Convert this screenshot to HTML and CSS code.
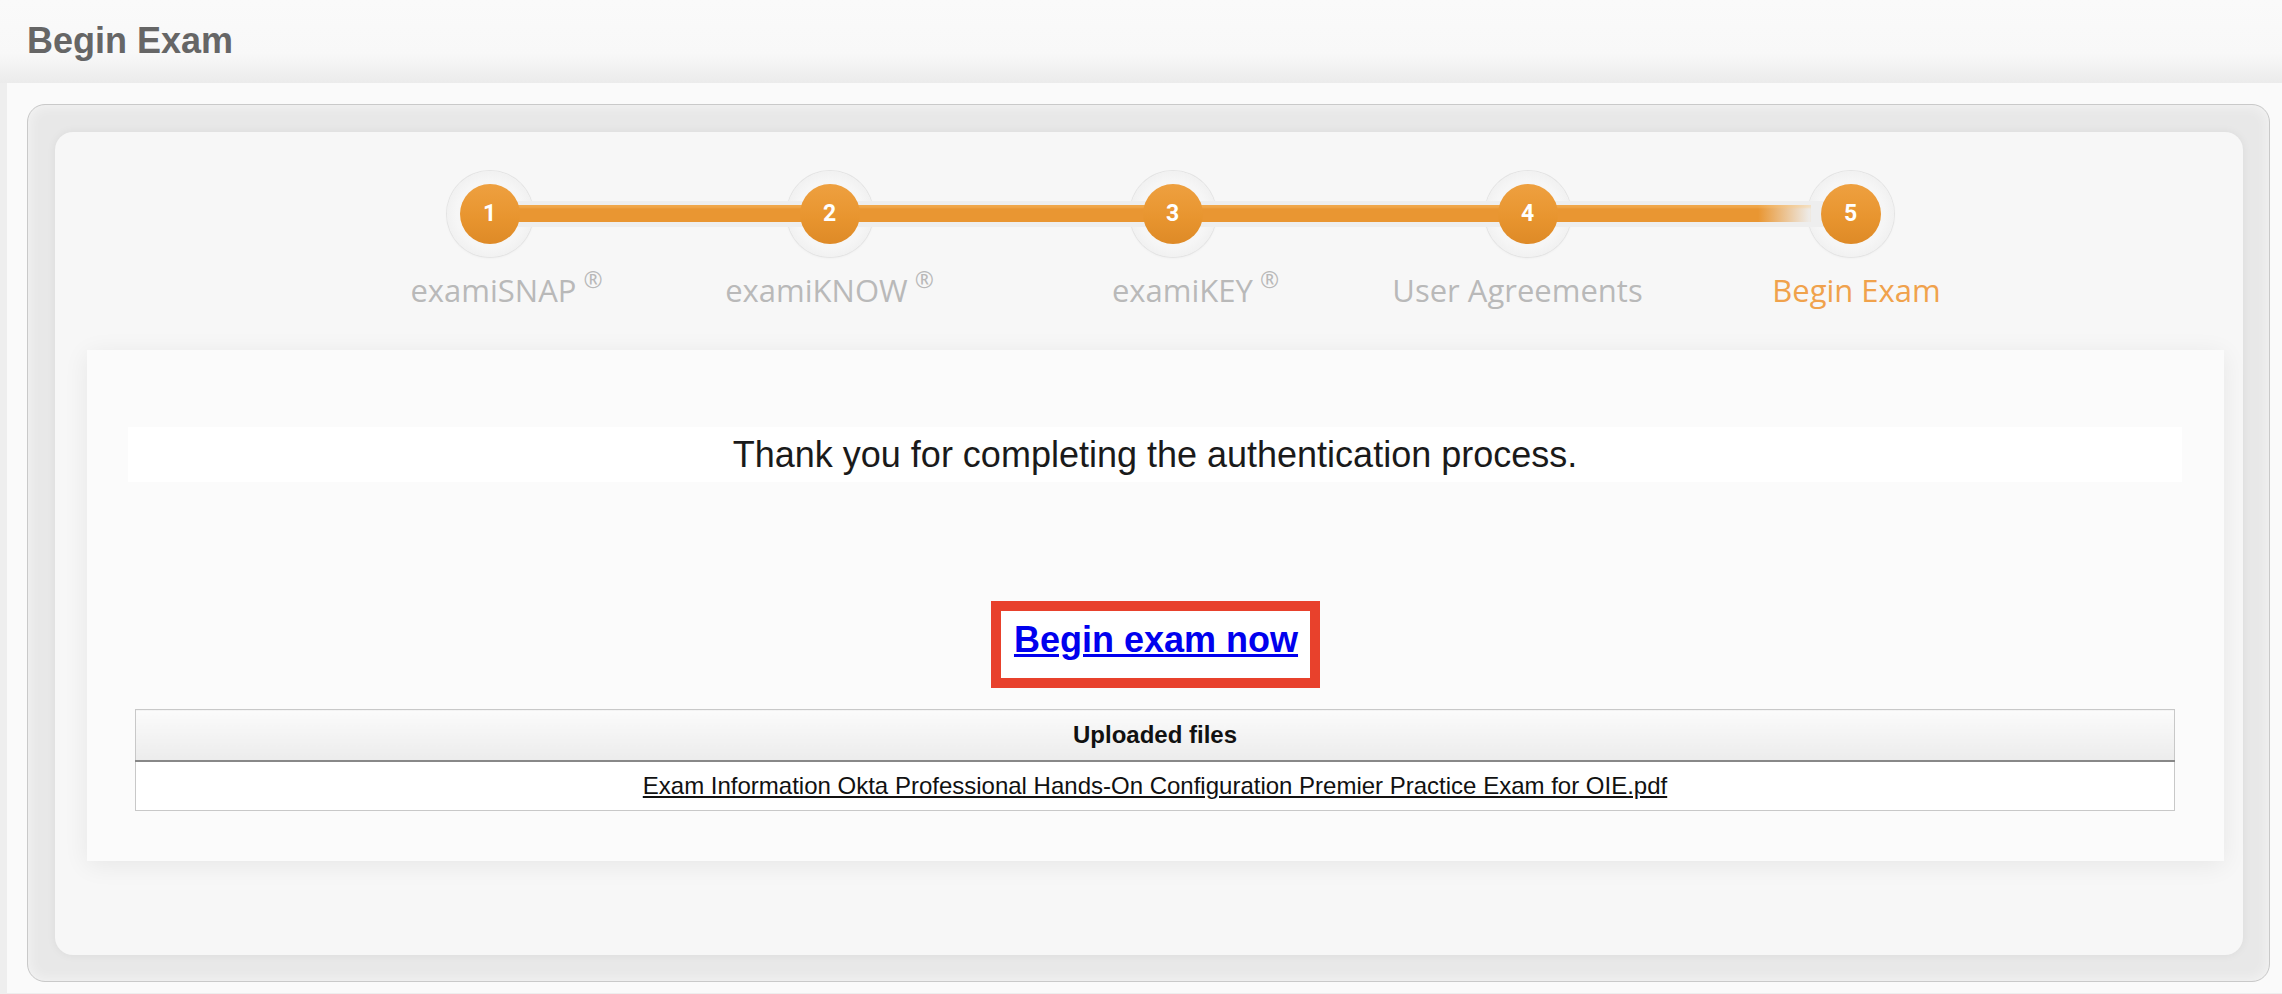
FILE: index.html
```html
<!DOCTYPE html>
<html lang="en">
<head>
    <meta charset="UTF-8">
    <meta name="viewport" content="width=device-width, initial-scale=1.0">
    <link rel="stylesheet" href="styles.css">
    <title>Begin Exam</title>
</head>
<body>
    <header class="page-head">
        <h1>Begin Exam</h1>
    </header>

    <main class="main">
        <div class="frame">
            <div class="panel">

                <!-- Progress steps -->
                <div class="steps">
                    <div class="track"><div class="track-fill"></div></div>
                    <div class="step">
                        <div class="ring"><span class="dot">1</span></div>
                        <div class="step-label">examiSNAP<sup>®</sup></div>
                    </div>
                    <div class="step">
                        <div class="ring"><span class="dot">2</span></div>
                        <div class="step-label">examiKNOW<sup>®</sup></div>
                    </div>
                    <div class="step">
                        <div class="ring"><span class="dot">3</span></div>
                        <div class="step-label">examiKEY<sup>®</sup></div>
                    </div>
                    <div class="step">
                        <div class="ring"><span class="dot">4</span></div>
                        <div class="step-label">User Agreements</div>
                    </div>
                    <div class="step active">
                        <div class="ring"><span class="dot">5</span></div>
                        <div class="step-label">Begin Exam</div>
                    </div>
                </div>

                <div class="card">
                    <p class="thanks">Thank you for completing the authentication process.</p>

                    <div class="begin">
                        <a class="begin-link" href="#">Begin exam now</a>
                    </div>

                    <table class="files">
                        <thead>
                            <tr><th>Uploaded files</th></tr>
                        </thead>
                        <tbody>
                            <tr><td><a href="#">Exam Information Okta Professional Hands-On Configuration Premier Practice Exam for OIE.pdf</a></td></tr>
                        </tbody>
                    </table>
                </div>

            </div>
        </div>
    </main>
</body>
</html>
```

FILE: styles.css
```css
body {
    margin: 0;
    background: #eeeeee;
    font-family: 'Liberation Sans', Arial, sans-serif;
    height: 994px;
    overflow: hidden;
}
.page-head {
    height: 83px;
    box-sizing: border-box;
    padding: 20px 0 0 27px;
    background: linear-gradient(to bottom, #fafafa 0%, #f8f8f8 65%, #ebebeb 100%);
}
.page-head h1 {
    margin: 0;
    font-size: 36px;
    line-height: 42px;
    font-weight: bold;
    color: #666666;
}
.main {
    margin-left: 7px;
    background: #fafafa;
    padding: 21px 12px 11px 20px;
}
.frame {
    border: 1px solid #c9c9c9;
    border-radius: 18px;
    background: #e8e8e8;
    padding: 27px 26px 26px 27px;
    box-shadow: inset 0 0 14px rgba(255, 255, 255, 0.6);
}
.panel {
    background: #f7f7f7;
    border-radius: 18px;
    padding: 39px 19px 94px 32px;
    box-shadow: 0 0 10px rgba(0, 0, 0, 0.06);
}

/* steps */
.steps {
    position: relative;
    display: grid;
    grid-template-columns: 340px 340px 346px 364px 282px;
    width: max-content;
    margin: 0 auto 40px;
}
.track {
    position: absolute;
    z-index: 1;
    left: 170px;
    right: 141px;
    top: 43px;
    height: 26px;
    margin-top: -13px;
    background: #eeeeee;
}
.track-fill {
    margin: 4px 40px 0 0;
    height: 17px;
    border-radius: 3px 0 0 3px;
    background: linear-gradient(to right, #e99632 0%, #e99632 96%, rgba(233, 150, 50, 0) 100%);
    box-shadow: inset 0 3px 2px rgba(255, 200, 120, 0.35);
}
.step {
    display: flex;
    flex-direction: column;
    align-items: center;
}
.ring {
    width: 86px;
    height: 86px;
    border-radius: 50%;
    background: radial-gradient(circle, #f6f6f6 55%, #e8e8e8 100%);
    box-shadow: 0 0 0 1px #e4e4e4, 0 1px 3px rgba(0, 0, 0, 0.06);
    display: flex;
    align-items: center;
    justify-content: center;
}
.dot {
    position: relative;
    z-index: 2;
    width: 60px;
    height: 60px;
    border-radius: 50%;
    background: linear-gradient(to bottom, #eea040 0%, #e8952f 55%, #de8a27 100%);
    color: #ffffff;
    font-family: Roboto, 'Liberation Sans', sans-serif;
    font-weight: bold;
    font-size: 23px;
    line-height: 60px;
    text-align: center;
}
.step-label {
    margin-top: 13px;
    font-family: 'Open Sans', 'Noto Sans', sans-serif;
    font-size: 31px;
    line-height: 40px;
    color: #b9b9b9;
    white-space: nowrap;
}
.step:nth-child(2) .step-label { margin-left: 34px; }
.step:nth-child(4) .step-label { margin-left: 46px; }
.step:nth-child(5) .step-label { margin-left: -20px; }
.step:nth-child(6) .step-label { margin-left: 12px; }
.step-label sup {
    font-size: 23px;
    margin-left: 7px;
    vertical-align: 14px;
    line-height: 0;
}
.step.active .step-label {
    color: #f0a24c;
}

/* card */
.card {
    background: #fbfbfb;
    box-shadow: 0 4px 24px rgba(0, 0, 0, 0.07);
    padding: 77px 0 50px;
}
.thanks {
    margin: 0 42px 0 41px;
    background: #ffffff;
    font-size: 36px;
    line-height: 55px;
    color: #1a1a1a;
    text-align: center;
}
.begin {
    margin-top: 119px;
    text-align: center;
}
.begin-link {
    display: inline-block;
    border: 10px solid #e8412c;
    background: #ffffff;
    padding: 8px 12px 18px 13px;
    font-size: 36px;
    line-height: 41px;
    font-weight: bold;
    color: #0000ee;
}
.files {
    margin: 21px 49px 0 48px;
    width: calc(100% - 97px);
    border-collapse: collapse;
    border: 1px solid #c8c8c8;
    background: #ffffff;
}
.files th {
    height: 50px;
    padding: 0;
    font-size: 24px;
    color: #111111;
    background: linear-gradient(to bottom, #fbfbfb 0%, #ececec 100%);
    border-bottom: 2px solid #888888;
}
.files td {
    height: 48px;
    padding: 0;
    text-align: center;
    font-size: 24px;
}
.files td a {
    color: #111111;
}
```
